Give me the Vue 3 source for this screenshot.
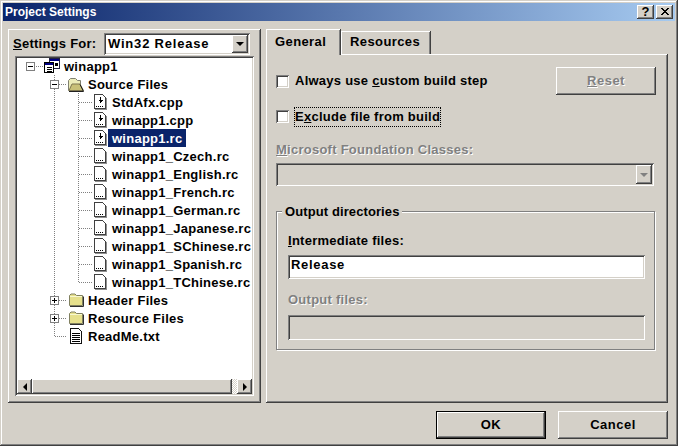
<script setup>
const files = ['StdAfx.cpp', 'winapp1.cpp', 'winapp1.rc', 'winapp1_Czech.rc', 'winapp1_English.rc', 'winapp1_French.rc', 'winapp1_German.rc', 'winapp1_Japanese.rc', 'winapp1_SChinese.rc', 'winapp1_Spanish.rc', 'winapp1_TChinese.rc']

const rows = [
  { label: 'winapp1', icon: 'project', width: 27, lines: 'M26 9H16M13.5 13V9M37.5 17V18', box: 13, sign: 'minus' },
  { label: 'Source Files', icon: 'open', width: 50, lines: 'M37.5 0V18M42 9H49M61.5 16V18', box: 37, sign: 'minus' },
  ...files.map((label, i) => ({
    label,
    icon: i < 3 ? 'source' : 'resource',
    width: 75,
    selected: i === 2,
    lines: `M37.5 0V18M61.5 0V${i === files.length - 1 ? 9 : 18}M62 9.5H75`
  })),
  { label: 'Header Files', icon: 'closed', width: 50, lines: 'M37.5 0V18M42 9H49', box: 37, sign: 'plus' },
  { label: 'Resource Files', icon: 'closed', width: 50, lines: 'M37.5 0V18M42 9H49', box: 37, sign: 'plus' },
  { label: 'ReadMe.txt', icon: 'text', width: 50, lines: 'M37.5 0V9M38 9.5H50' }
]
</script>

<template>
  <div class="window">
    <div class="titlebar">
      <span>Project Settings</span>
      <div class="title-buttons">
        <button class="title-btn raised">?</button>
        <button class="title-btn raised close">
          <svg width="9" height="8" viewBox="0 0 9 8"><path d="M1 0L8 7M2 0L9 7M8 0L1 7M9 0L2 7" stroke="#000" fill="none" /></svg>
        </button>
      </div>
    </div>

    <div class="panes">
      <section class="left-panel panel">
        <div class="settings-row">
          <label class="settings-label"><u>S</u>ettings For:</label>
          <div class="combo sunken settings-combo">
            <span class="combo-value">Win32 Release</span>
            <span class="combo-arrow raised"><i class="arrow-down"></i></span>
          </div>
        </div>
        <div class="tree sunken">
          <div class="tree-rows">
            <div v-for="row in rows" :key="row.label" class="tree-row">
              <svg class="gutter" :width="row.width" height="18" :viewBox="`0 0 ${row.width} 18`">
                <path :d="row.lines" stroke="#808080" stroke-dasharray="1 1" fill="none" shape-rendering="crispEdges" />
                <g v-if="row.box !== undefined" :transform="`translate(${row.box - 4} 5)`" shape-rendering="crispEdges">
                  <rect x=".5" y=".5" width="8" height="8" fill="#fff" stroke="#808080" />
                  <path d="M2 4.5H7" stroke="#000" />
                  <path v-if="row.sign === 'plus'" d="M4.5 2V7" stroke="#000" />
                </g>
              </svg>

              <svg v-if="row.icon === 'project'" class="icon project" width="16" height="16" viewBox="0 0 16 16" shape-rendering="crispEdges">
                <rect x="5.5" y=".5" width="10" height="10" fill="#fff" stroke="#202040" />
                <rect x="6" y="1" width="9" height="2" fill="#000080" />
                <rect x="11" y="5" width="3" height="3" fill="#000" />
                <rect x="7" y="4" width="3" height="1" fill="#808080" />
                <rect x=".5" y="4.5" width="9" height="10" fill="#fff" stroke="#000" />
                <rect x="1" y="5" width="8" height="2" fill="#000080" />
                <path d="M3 9.5H8M3 11.5H8M3 13.5H8" stroke="#000" />
              </svg>

              <svg v-else-if="row.icon === 'open'" class="icon folder-open" width="17" height="15" viewBox="0 0 17 15">
                <path d="M1.5 13.5V3.5L3.5 1.5H8.5L10.5 3.5H13.5V13.5Z" fill="#ececb8" stroke="#808070" />
                <path d="M2 13.5L5 7H13L16.5 13.5Z" fill="#c8c078" stroke="#807850" />
                <path d="M2 14.5H16.5L13 7.5" stroke="#202020" fill="none" />
              </svg>

              <svg v-else-if="row.icon === 'closed'" class="icon folder-closed" width="16" height="14" viewBox="0 0 16 14">
                <path d="M1.5 12.5V2.5L3 1H7L8.5 2.5H14.5V12.5Z" fill="#e6e08c" stroke="#808060" />
                <path d="M2 3.5H14" stroke="#f8f8d0" />
                <path d="M2 13.5H15.5V3.5" stroke="#303030" fill="none" />
              </svg>

              <svg v-else-if="row.icon === 'text'" class="icon doc-text" width="14" height="16" viewBox="0 0 14 16" shape-rendering="crispEdges">
                <path d="M1.5 .5H9.5L12.5 3.5V15.5H1.5Z" fill="#fff" stroke="#101010" />
                <path d="M3 5.5H11M3 7.5H11M3 9.5H11M3 11.5H11M3 13.5H11" stroke="#000" />
              </svg>

              <svg v-else class="icon doc" width="14" height="16" viewBox="0 0 14 16" shape-rendering="crispEdges">
                <path d="M1.5 .5H9.5L12.5 3.5V14.5H1.5Z" fill="#fff" stroke="#404040" />
                <path d="M2 15.5H13.5V4" stroke="#909090" fill="none" />
                <path v-if="row.icon === 'source'" d="M7.5 3V9M5.5 6.5H9.5M6.5 7.5H8.5" stroke="#000" />
                <path d="M3 12.5H11" stroke="#000" stroke-dasharray="1 1" />
              </svg>

              <span class="tree-label" :class="{ selected: row.selected }">{{ row.label }}</span>
            </div>
          </div>

          <div class="scrollbar">
            <span class="scroll-btn raised"><i class="arrow-left"></i></span>
            <span class="scroll-thumb raised"></span>
            <span class="scroll-track"></span>
            <span class="scroll-btn raised"><i class="arrow-right"></i></span>
          </div>
        </div>
      </section>

      <section class="right-pane">
        <div class="tabs">
          <div class="tab active">General</div>
          <div class="tab">Resources</div>
        </div>

        <div class="page panel">
          <div class="option-row">
            <label class="check-row">
              <span class="checkbox sunken"></span>
              <span>Always use <u>c</u>ustom build step</span>
            </label>
            <button class="btn raised reset disabled"><span><u>R</u>eset</span></button>
          </div>

          <label class="check-row exclude">
            <span class="checkbox sunken"></span>
            <span class="focused">E<u>x</u>clude file from build</span>
          </label>

          <div class="field-label mfc disabled"><u>M</u>icrosoft Foundation Classes:</div>
          <div class="combo sunken mfc-combo">
            <span></span>
            <span class="combo-arrow raised"><i class="arrow-down muted"></i></span>
          </div>

          <div class="group">
            <div class="legend">Output directories</div>
            <div class="field-label intermediate"><u>I</u>ntermediate files:</div>
            <div class="input sunken white">Release</div>
            <div class="field-label output disabled">Output files:</div>
            <div class="input sunken output-input"></div>
          </div>
        </div>
      </section>
    </div>

    <div class="footer">
      <button class="btn default">OK</button>
      <button class="btn raised">Cancel</button>
    </div>
  </div>
</template>

<style>
html, body { margin: 0; background: #d4d0c8; }
</style>

<style scoped>
.window {
  box-sizing: border-box;
  width: 678px;
  height: 446px;
  padding: 3px;
  background: #d4d0c8;
  box-shadow: inset -1px -1px #404040, inset 1px 1px #d4d0c8, inset -2px -2px #808080, inset 2px 2px #fff;
  font: bold 13px/16px "Liberation Sans", Arial, sans-serif;
  letter-spacing: .25px;
  color: #000;
  overflow: hidden;
}
.raised {
  box-shadow: inset -1px -1px #404040, inset 1px 1px #fff, inset -2px -2px #808080;
  background: #d4d0c8;
}
.sunken {
  box-shadow: inset 1px 1px #808080, inset -1px -1px #fff, inset 2px 2px #404040, inset -2px -2px #d4d0c8;
}
.panel {
  box-shadow: inset -1px -1px #404040, inset 1px 1px #fff, inset -2px -2px #808080;
  box-sizing: border-box;
}
.titlebar {
  height: 18px;
  padding: 0 2px;
  display: flex;
  align-items: center;
  justify-content: space-between;
  background: linear-gradient(90deg, #0a246a, #a6caf0);
  color: #fff;
  font-size: 12px;
  letter-spacing: 0;
}
.title-buttons { display: flex; gap: 2px; }
.title-btn {
  width: 17px;
  height: 14px;
  padding: 0;
  border: 0;
  display: flex;
  align-items: center;
  justify-content: center;
  font: bold 13px/14px "Liberation Sans", sans-serif;
  color: #000;
}
.panes {
  display: flex;
  gap: 5px;
  margin-top: 8px;
  padding-left: 5px;
  height: 374px;
}
.left-panel {
  width: 253px;
  padding: 4px 7px 7px;
  display: flex;
  flex-direction: column;
  gap: 2px;
}
.settings-row {
  display: flex;
  align-items: center;
  margin-left: -2px;
  height: 21px;
}
.settings-label { width: 91px; white-space: nowrap; }
.combo {
  box-sizing: border-box;
  display: flex;
  justify-content: space-between;
  align-items: center;
  padding: 2px;
}
.settings-combo {
  width: 146px;
  height: 22px;
  background: #fff;
  padding-left: 4px;
}
.combo-value { letter-spacing: .8px; }
.combo-arrow {
  width: 16px;
  align-self: stretch;
  display: flex;
  align-items: center;
  justify-content: center;
}
.arrow-down, .arrow-left, .arrow-right {
  display: block;
  width: 0;
  height: 0;
}
.arrow-down { border: 4px solid transparent; border-top-color: #000; border-bottom-width: 0; }
.arrow-down.muted { border-top-color: #808080; }
.arrow-left { border: 4px solid transparent; border-right: 4px solid #000; border-left-width: 0; }
.arrow-right { border: 4px solid transparent; border-left: 4px solid #000; border-right-width: 0; }
.tree {
  box-sizing: border-box;
  width: 239px;
  height: 340px;
  padding: 1px 2px 2px;
  background: #fff;
  display: flex;
  flex-direction: column;
  justify-content: space-between;
}
.tree-rows { overflow: hidden; }
.tree-row {
  display: flex;
  align-items: center;
  height: 18px;
  white-space: nowrap;
}
.gutter { flex: none; }
.icon { flex: none; }
.project { margin-right: 4px; }
.folder-open { margin-right: 4px; }
.folder-closed { margin: 0 4px 0 1px; }
.doc { margin: 0 5px 0 1px; }
.doc-text { margin: 0 5px 0 2px; }
.tree-label { height: 18px; line-height: 20px; }
.selected {
  margin-left: -4px;
  padding: 0 4px;
  background: #0a246a;
  color: #fff;
}
.scrollbar {
  display: flex;
  height: 15px;
  background: #d4d0c8;
  flex: none;
}
.scroll-btn {
  width: 15px;
  flex: none;
  display: flex;
  align-items: center;
  justify-content: center;
}
.scroll-thumb { width: 200px; flex: none; }
.scroll-track {
  flex: 1;
  background: repeating-conic-gradient(#fff 0 25%, #d4d0c8 0 50%) 0 0 / 2px 2px;
}
.right-pane { width: 402px; display: flex; flex-direction: column; }
.tabs { display: flex; height: 25px; align-items: flex-end; letter-spacing: .4px; }
.tab {
  box-sizing: border-box;
  height: 23px;
  width: 90px;
  padding: 3px 0 0 9px;
  box-shadow: inset -1px 0 #404040, inset 1px 0 #fff, inset 0 1px #fff, inset -2px 0 #808080;
  color: #000;
}
.tab.active {
  position: relative;
  height: 26px;
  width: 75px;
  margin-bottom: -1px;
  padding: 5px 0 0 9px;
  background: #d4d0c8;
}
.page {
  flex: 1;
  padding: 13px 10px 0;
}
.option-row {
  display: flex;
  align-items: center;
  justify-content: space-between;
  width: 380px;
  height: 28px;
}
.check-row {
  display: flex;
  align-items: center;
  gap: 6px;
}
.checkbox {
  box-sizing: border-box;
  width: 13px;
  height: 13px;
  background: #fff;
  flex: none;
}
.exclude { margin-top: 12px; height: 19px; }
.focused {
  outline: 1px dotted #000;
  padding: 1px 0;
}
.btn {
  width: 110px;
  height: 28px;
  padding: 0;
  border: 0;
  background: #d4d0c8;
  font: inherit;
  letter-spacing: .5px;
  color: #000;
}
.reset { width: 100px; }
.disabled { color: #808080; text-shadow: 1px 1px #fff; }
.field-label { height: 16px; white-space: nowrap; }
.mfc { margin-top: 16px; }
.mfc-combo {
  width: 378px;
  height: 23px;
  margin-top: 5px;
}
.group {
  box-sizing: border-box;
  width: 379px;
  height: 139px;
  margin-top: 25px;
  padding: 0 9px 0 11px;
  border: 1px solid #808080;
  box-shadow: inset 1px 1px #fff, 1px 1px #fff;
}
.legend {
  width: fit-content;
  height: 16px;
  margin: -8px 0 0 -6px;
  padding: 0 3px;
  background: #d4d0c8;
  letter-spacing: .1px;
}
.intermediate { margin-top: 13px; }
.input {
  box-sizing: border-box;
  width: 357px;
  height: 24px;
  margin-top: 6px;
  padding: 1px 3px;
  line-height: 18px;
  letter-spacing: .7px;
}
.white { background: #fff; }
.output { margin-top: 13px; }
.output-input { height: 25px; margin-top: 7px; }
.footer {
  display: flex;
  justify-content: flex-end;
  gap: 12px;
  margin-top: 8px;
  padding-right: 7px;
}
.default {
  box-shadow: inset -1px -1px #000, inset 1px 1px #000, inset -2px -2px #404040, inset 2px 2px #fff, inset -3px -3px #808080;
}
</style>
